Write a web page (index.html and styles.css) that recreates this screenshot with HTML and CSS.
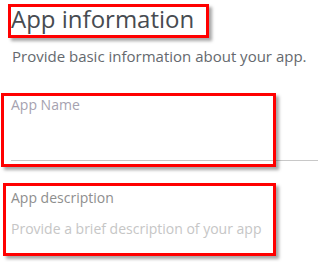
FILE: index.html
```html
<!DOCTYPE html>
<html lang="en">

<head>
    <meta charset="utf-8">
    <meta name="viewport" content="width=device-width, initial-scale=1.0">
    <title>App information</title>
    <link rel="stylesheet" href="styles.css">
</head>

<body>
    <main class="form">
        <h1 class="titel">App information</h1>
        <p class="intro">Provide basic information about your app.</p>

        <div class="felt navn">
            <label class="etiket">App Name</label>
        </div>

        <div class="felt beskrivelse">
            <label class="etiket">App description</label>
            <p class="pladsholder">Provide a brief description of your app</p>
        </div>
    </main>

    <!-- markeringer oven paa skaermbilledet -->
    <div class="markering m1"></div>
    <div class="markering m2"></div>
    <div class="markering m3"></div>
</body>

</html>
```
FILE: styles.css
```css
body {
    margin: 0;
    font-family: "Open Sans", "Noto Sans", sans-serif;
    background: #fff;
}

.form {
    padding: 0 0 0 11px;
}

.titel {
    margin: 0;
    padding-top: 5px;
    font-size: 24px;
    line-height: 28px;
    font-weight: normal;
    color: #474b51;
}

.intro {
    margin: 14px 0 0 1px;
    font-size: 15px;
    line-height: 18px;
    color: #65696e;
}

.felt {
    display: flex;
    flex-direction: column;
}

.navn {
    margin-top: 31px;
    height: 64px;
    border-bottom: 1px solid #c8c8c8;
}

.beskrivelse {
    margin-top: 28px;
}

.etiket {
    font-size: 14px;
    line-height: 18px;
    color: #a6a2b0;
}

.beskrivelse .etiket {
    color: #8e8e8e;
}

.pladsholder {
    margin: 13px 0 0;
    font-size: 14px;
    line-height: 18px;
    color: #c6c6c6;
}

.markering {
    position: absolute;
    border: 3px solid #f00;
    box-shadow: 3px 3px 3px rgba(0, 0, 0, 0.35);
}

.m1 {
    left: 8px;
    top: 4px;
    width: 195px;
    height: 28px;
}

.m2 {
    left: 1px;
    top: 93px;
    width: 269px;
    height: 68px;
}

.m3 {
    left: 3px;
    top: 183px;
    width: 267px;
    height: 67px;
}
```
